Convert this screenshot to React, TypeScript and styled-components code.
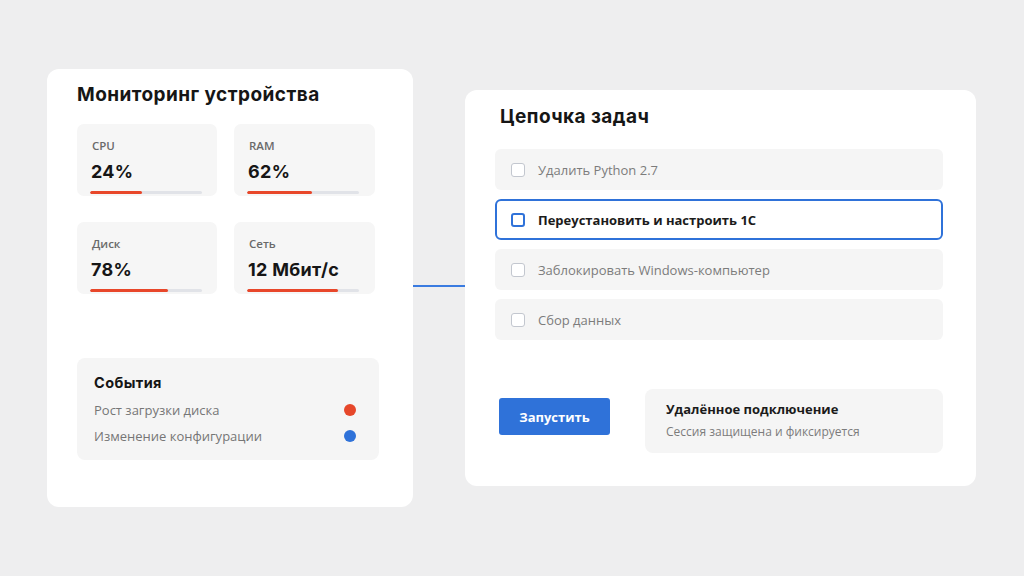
import React from "react";
import styled, { createGlobalStyle } from "styled-components";

const GlobalStyle = createGlobalStyle`
  html, body { margin: 0; padding: 0; }
  body {
    background: #eeeeef;
    font-family: "Open Sans", "Noto Sans", sans-serif;
    color: #1b1b1b;
  }
  * { box-sizing: border-box; }
`;

const Stage = styled.div`
  width: 1024px;
  height: 576px;
  display: flex;
  align-items: center;
  padding-left: 47px;
`;

const Card = styled.section<{ $w: number; $h: number }>`
  width: ${(p) => p.$w}px;
  height: ${(p) => p.$h}px;
  background: #ffffff;
  border-radius: 12px;
  display: flex;
  flex-direction: column;
`;

const MonitorCard = styled(Card)`
  padding: 14px 34px 0 30px;
`;

const ChainCard = styled(Card)`
  padding: 15px 33px 0 30px;
`;

const Heading = styled.h2<{ $indent?: number }>`
  margin: 0;
  padding-left: ${(p) => p.$indent ?? 0}px;
  font-family: "Inter", "Noto Sans", sans-serif;
  font-weight: 700;
  font-size: 19px;
  line-height: 24px;
  letter-spacing: 0.45px;
  color: #161616;
`;

const MetricGrid = styled.div`
  margin-top: 17px;
  width: 298px;
  display: grid;
  grid-template-columns: 140px 141px;
  column-gap: 17px;
  row-gap: 26px;
`;

const Tile = styled.div`
  height: 72px;
  background: #f6f6f6;
  border-radius: 7px;
  padding: 15px 14px 0 13px;
  display: flex;
  flex-direction: column;
`;

const TileLabel = styled.div`
  font-family: "Open Sans", sans-serif;
  font-weight: 600;
  font-size: 11.5px;
  line-height: 14px;
  color: #6a6a6a;
  padding-left: 2px;
`;

const TileValue = styled.div`
  margin-top: 9px;
  font-family: "Inter", sans-serif;
  font-weight: 700;
  font-size: 18px;
  line-height: 20px;
  letter-spacing: 0.3px;
  color: #161616;
  padding-left: 1px;
`;

const Track = styled.div`
  margin-top: 9px;
  height: 3px;
  width: 112px;
  border-radius: 2px;
  background: #e1e3e8;
  overflow: hidden;
`;

const Fill = styled.div`
  height: 100%;
  background: #e8472a;
  border-radius: 2px;
`;

const Events = styled.div`
  margin-top: 64px;
  width: 302px;
  height: 102px;
  background: #f5f5f5;
  border-radius: 8px;
  padding: 16px 18px 0 17px;
  display: flex;
  flex-direction: column;
`;

const EventsTitle = styled.div`
  font-family: "Inter", sans-serif;
  font-weight: 700;
  font-size: 14.5px;
  line-height: 18px;
  letter-spacing: 0.4px;
  color: #161616;
  margin-bottom: 5px;
`;

const EventRow = styled.div`
  height: 26px;
  display: flex;
  align-items: center;
  justify-content: space-between;
  font-size: 13px;
  color: #767676;
`;

const Dot = styled.span<{ $color: string }>`
  width: 12px;
  height: 12px;
  border-radius: 50%;
  background: ${(p) => p.$color};
  margin-right: 5px;
`;

const Connector = styled.div`
  width: 52px;
  height: 2px;
  background: #3a7be0;
  margin-bottom: 5px;
`;

const TaskList = styled.div`
  margin-top: 20px;
  display: flex;
  flex-direction: column;
  gap: 9px;
`;

const Task = styled.div<{ $active?: boolean }>`
  height: 41px;
  border-radius: 6px;
  display: flex;
  align-items: center;
  gap: 13px;
  background: ${(p) => (p.$active ? "#ffffff" : "#f5f5f5")};
  border: ${(p) => (p.$active ? "2px solid #2f72d9" : "none")};
  padding-left: ${(p) => (p.$active ? 14 : 16)}px;
  font-size: 13px;
  font-weight: ${(p) => (p.$active ? 700 : 400)};
  color: ${(p) => (p.$active ? "#1b1b1b" : "#7c7c7c")};
`;

const Box = styled.span<{ $active?: boolean }>`
  width: 14px;
  height: 14px;
  border-radius: 3px;
  border: ${(p) => (p.$active ? "2px solid #2f72d9" : "1.5px solid #c3c7cf")};
  background: #fff;
  flex-shrink: 0;
`;

const Footer = styled.div`
  margin-top: 49px;
  display: flex;
  align-items: flex-start;
  gap: 35px;
`;

const RunButton = styled.button`
  margin: 9px 0 0 4px;
  width: 111px;
  height: 37px;
  border: none;
  border-radius: 3px;
  background: #2f72d9;
  color: #ffffff;
  font-family: "Open Sans", sans-serif;
  font-weight: 700;
  font-size: 13px;
  cursor: pointer;
`;

const Remote = styled.div`
  flex: 1;
  height: 64px;
  background: #f5f5f5;
  border-radius: 8px;
  padding: 11px 20px 0 21px;
  display: flex;
  flex-direction: column;
  gap: 6px;
`;

const RemoteTitle = styled.div`
  font-weight: 700;
  font-size: 13px;
  line-height: 18px;
  color: #1b1b1b;
`;

const RemoteSub = styled.div`
  font-size: 12px;
  line-height: 16px;
  color: #7c7c7c;
`;

const metrics = [
  { label: "CPU", value: "24%", fill: 46 },
  { label: "RAM", value: "62%", fill: 58 },
  { label: "Диск", value: "78%", fill: 70 },
  { label: "Сеть", value: "12 Мбит/с", fill: 81 },
];

const tasks = [
  { text: "Удалить Python 2.7" },
  { text: "Переустановить и настроить 1С", active: true },
  { text: "Заблокировать Windows-компьютер" },
  { text: "Сбор данных" },
];

export default function App() {
  return (
    <>
      <GlobalStyle />
      <Stage>
        <MonitorCard $w={366} $h={438}>
          <Heading>Мониторинг устройства</Heading>
          <MetricGrid>
            {metrics.map((m) => (
              <Tile key={m.label}>
                <TileLabel>{m.label}</TileLabel>
                <TileValue>{m.value}</TileValue>
                <Track>
                  <Fill style={{ width: `${m.fill}%` }} />
                </Track>
              </Tile>
            ))}
          </MetricGrid>
          <Events>
            <EventsTitle>События</EventsTitle>
            <EventRow>
              Рост загрузки диска
              <Dot $color="#e6472a" />
            </EventRow>
            <EventRow>
              Изменение конфигурации
              <Dot $color="#2f72d9" />
            </EventRow>
          </Events>
        </MonitorCard>
        <Connector />
        <ChainCard $w={511} $h={396}>
          <Heading $indent={5}>Цепочка задач</Heading>
          <TaskList>
            {tasks.map((t) => (
              <Task key={t.text} $active={t.active}>
                <Box $active={t.active} />
                {t.text}
              </Task>
            ))}
          </TaskList>
          <Footer>
            <RunButton>Запустить</RunButton>
            <Remote>
              <RemoteTitle>Удалённое подключение</RemoteTitle>
              <RemoteSub>Сессия защищена и фиксируется</RemoteSub>
            </Remote>
          </Footer>
        </ChainCard>
      </Stage>
    </>
  );
}
